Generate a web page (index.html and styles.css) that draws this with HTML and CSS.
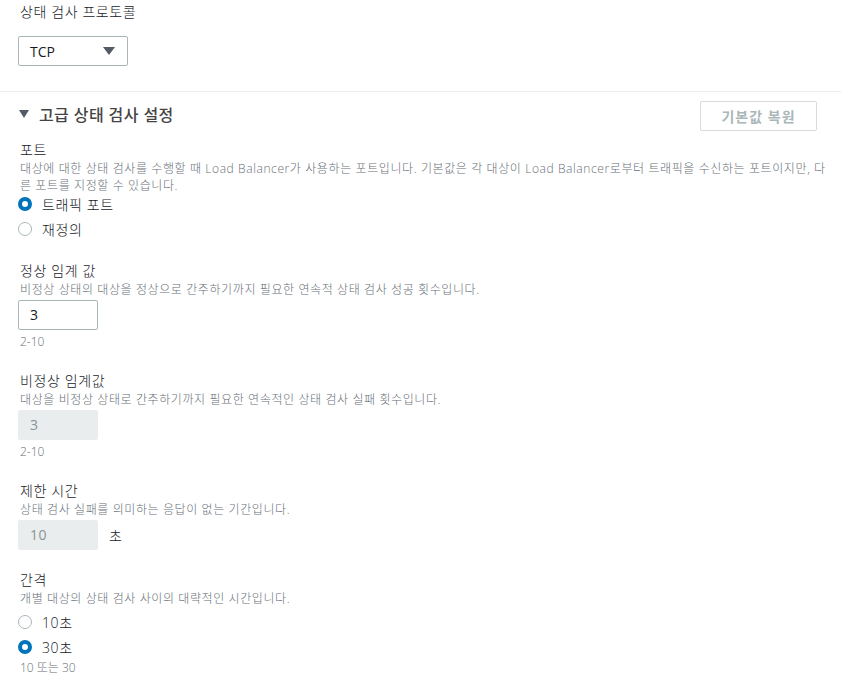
FILE: index.html
```html
<!DOCTYPE html>
<html lang="ko">
<head>
    <meta charset="UTF-8">
    <meta name="viewport" content="width=device-width, initial-scale=1.0">
    <title>상태 검사</title>
    <link rel="stylesheet" href="styles.css">
</head>
<body>

<div class="protocol-section">
    <div class="field-label">상태 검사 프로토콜</div>
    <div class="select-box">
        <span>TCP</span>
        <span class="select-arrow"></span>
    </div>
</div>

<div class="advanced-section">
    <div class="advanced-header">
        <div class="advanced-title">
            <span class="caret"></span>
            고급 상태 검사 설정
        </div>
        <button class="reset-btn" disabled>기본값 복원</button>
    </div>

    <div class="field">
        <div class="field-label">포트</div>
        <div class="field-desc">대상에 대한 상태 검사를 수행할 때 Load Balancer가 사용하는 포트입니다. 기본값은 각 대상이 Load Balancer로부터 트래픽을 수신하는 포트이지만, 다른 포트를 지정할 수 있습니다.</div>
        <div class="radio-list">
            <label class="radio-row"><span class="radio checked"></span>트래픽 포트</label>
            <label class="radio-row"><span class="radio"></span>재정의</label>
        </div>
    </div>

    <div class="field">
        <div class="field-label">정상 임계 값</div>
        <div class="field-desc">비정상 상태의 대상을 정상으로 간주하기까지 필요한 연속적 상태 검사 성공 횟수입니다.</div>
        <div class="input-row">
            <div class="text-input">3</div>
        </div>
        <div class="field-hint">2-10</div>
    </div>

    <div class="field">
        <div class="field-label">비정상 임계값</div>
        <div class="field-desc">대상을 비정상 상태로 간주하기까지 필요한 연속적인 상태 검사 실패 횟수입니다.</div>
        <div class="input-row">
            <div class="text-input disabled">3</div>
        </div>
        <div class="field-hint">2-10</div>
    </div>

    <div class="field">
        <div class="field-label">제한 시간</div>
        <div class="field-desc">상태 검사 실패를 의미하는 응답이 없는 기간입니다.</div>
        <div class="input-row">
            <div class="text-input disabled">10</div>
            <span class="unit">초</span>
        </div>
    </div>

    <div class="field">
        <div class="field-label">간격</div>
        <div class="field-desc">개별 대상의 상태 검사 사이의 대략적인 시간입니다.</div>
        <div class="radio-list">
            <label class="radio-row"><span class="radio"></span>10초</label>
            <label class="radio-row"><span class="radio checked"></span>30초</label>
        </div>
        <div class="field-hint tight">10 또는 30</div>
    </div>
</div>

</body>
</html>
```

FILE: styles.css
```css
body {
    margin: 0;
    font-family: "Open Sans", "Noto Sans CJK KR", sans-serif;
    font-size: 14px;
    font-weight: 300;
    letter-spacing: 0.6px;
    color: #16191f;
    background: #ffffff;
}

.protocol-section {
    padding: 2px 0 25px 18px;
    border-bottom: 1px solid #eaeded;
}

.field-label {
    line-height: 20px;
    padding-left: 2px;
}

.select-box {
    margin-top: 14px;
    width: 110px;
    height: 30px;
    box-sizing: border-box;
    border: 1px solid #aab7b8;
    border-radius: 2px;
    display: flex;
    align-items: center;
    justify-content: space-between;
    padding: 0 12px 0 11px;
    font-weight: 400;
    letter-spacing: 0;
}

.select-arrow {
    width: 0;
    height: 0;
    border-left: 6px solid transparent;
    border-right: 6px solid transparent;
    border-top: 8px solid #545b64;
}

.advanced-section {
    padding: 9px 24px 0 18px;
}

.advanced-header {
    display: flex;
    align-items: center;
    justify-content: space-between;
}

.advanced-title {
    display: flex;
    align-items: center;
    padding-bottom: 4px;
    font-size: 16px;
    font-weight: 500;
    letter-spacing: 0.4px;
    color: #444444;
}

.caret {
    width: 0;
    height: 0;
    border-left: 5px solid transparent;
    border-right: 5px solid transparent;
    border-top: 8px solid #545b64;
    margin-right: 10px;
    margin-left: 1px;
}

.reset-btn {
    width: 117px;
    height: 30px;
    background: #ffffff;
    border: 1px solid #d5dbdb;
    border-radius: 2px;
    color: #aab7b8;
    font-family: inherit;
    font-size: 14px;
    font-weight: bold;
    letter-spacing: 1px;
}

.field {
    margin-top: 9px;
}

.field + .field {
    margin-top: 20px;
}

.field-desc {
    font-size: 12px;
    line-height: 17px;
    color: #687078;
    padding-left: 2px;
    margin-right: -14px;
    word-break: break-all;
}

.radio-list {
    margin-top: -3px;
}

.field:last-child .radio-list {
    margin-top: 2px;
}

.radio-row {
    display: flex;
    align-items: center;
    height: 25px;
}

.radio {
    width: 12px;
    height: 12px;
    border: 1px solid #aab7b8;
    border-radius: 50%;
    margin: 0 10px 0 0;
    box-sizing: content-box;
}

.radio.checked {
    width: 6px;
    height: 6px;
    border: 4px solid #0073bb;
    background: #ffffff;
}

.input-row {
    display: flex;
    align-items: center;
    margin-top: 2px;
}

.text-input {
    width: 80px;
    height: 30px;
    box-sizing: border-box;
    border: 1px solid #aab7b8;
    border-radius: 2px;
    padding-left: 11px;
    line-height: 28px;
    font-weight: 400;
}

.text-input.disabled {
    background: #eaeded;
    border-color: #eaeded;
    color: #879596;
}

.unit {
    margin-left: 11px;
}

.field-hint {
    font-size: 12px;
    line-height: 18px;
    color: #687078;
    margin-top: 3px;
    padding-left: 2px;
    letter-spacing: 0;
}

.field-hint.tight {
    margin-top: 0;
}
```
